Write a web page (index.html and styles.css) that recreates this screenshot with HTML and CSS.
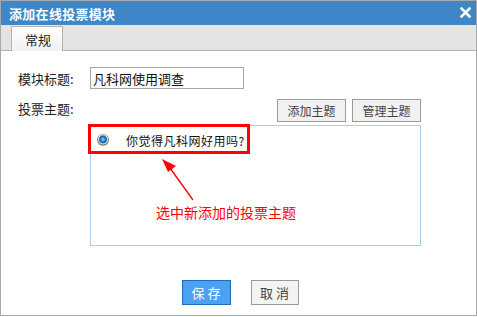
FILE: index.html
```html
<!DOCTYPE html>
<html lang="zh-CN">
<head>
<meta charset="UTF-8" />
<title>添加在线投票模块</title>
<link rel="stylesheet" href="styles.css">
</head>
<body>

  <div class="dialog">
    <div class="titlebar">
      <span class="title">添加在线投票模块</span>
      <svg class="close" width="11" height="11" viewBox="0 0 11 11">
        <path d="M1.5 1.5 L9.5 9.5 M9.5 1.5 L1.5 9.5" stroke="#fff" stroke-width="2.6" stroke-linecap="square" />
      </svg>
    </div>

    <div class="tabs">
      <div class="tab">常规</div>
    </div>

    <div class="form">
      <div class="label">模块标题:</div>
      <input class="text-input" type="text" value="凡科网使用调查">

      <div class="label label-top">投票主题:</div>
      <div class="topics">
        <div class="toolbar">
          <button class="btn">添加主题</button>
          <button class="btn">管理主题</button>
        </div>
        <div class="topic-box">
          <div class="topic">
            <span class="radio"></span>
            <span>你觉得凡科网好用吗?</span>
          </div>

          <!-- annotation -->
          <div class="mark"></div>
          <svg class="arrow" width="40" height="46" viewBox="0 0 40 46">
            <path d="M33 43 L10 11" stroke="#f00" stroke-width="1.3" />
            <path d="M2 2 L16 9 L8 15 Z" fill="#f00" />
          </svg>
          <div class="note">选中新添加的投票主题</div>
        </div>
      </div>
    </div>

    <div class="footer">
      <button class="btn-save">保存</button>
      <button class="btn-cancel">取消</button>
    </div>
  </div>

</body>
</html>
```

FILE: styles.css
```css
body {
  margin: 0;
  font-family: "Noto Sans CJK SC", sans-serif;
  font-size: 12px;
  color: #222;
}

.dialog {
  width: 475px;
  height: 314px;
  border: 1px solid #a9a9a9;
  background: #fff;
  display: flex;
  flex-direction: column;
}

.titlebar {
  height: 24px;
  background-color: #3f87c6;
  color: #fff;
  display: flex;
  align-items: center;
  justify-content: space-between;
  padding: 0 5px 0 8px;
}

.title {
  font-size: 13px;
  font-weight: bold;
  letter-spacing: 0.3px;
}

.close {
  margin-top: -1px;
}

.tabs {
  height: 25px;
  background-color: #e4e4e4;
  border-bottom: 1px solid #b4b4b4;
  display: flex;
  align-items: flex-end;
  padding-left: 10px;
}

.tab {
  width: 52px;
  height: 25px;
  margin-bottom: -1px;
  border: 1px solid #b4b4b4;
  border-bottom: none;
  background: linear-gradient(#ffffff, #f1f1f1);
  font-size: 13px;
  display: flex;
  align-items: center;
  justify-content: center;
  box-sizing: border-box;
  padding-left: 2px;
}

.form {
  display: grid;
  grid-template-columns: 72px 331px;
  row-gap: 10px;
  padding: 16px 0 0 17px;
}

.label {
  display: flex;
  align-items: center;
  font-size: 13px;
}

.label-top {
  align-items: flex-start;
}

.text-input {
  width: 154px;
  height: 22px;
  box-sizing: border-box;
  border: 1px solid #a6a6a6;
  padding: 0 2px;
  font-family: "Noto Sans CJK SC", sans-serif;
  font-size: 13px;
  color: #111;
  outline: none;
}

.toolbar {
  display: flex;
  justify-content: flex-end;
  gap: 6px;
  margin-bottom: 3px;
}

.btn {
  width: 69px;
  height: 23px;
  border: 1px solid #9a9a9a;
  background: #f1f1f1;
  font-family: "Noto Sans CJK SC", sans-serif;
  font-size: 12px;
  color: #444;
  padding: 0;
}

.topic-box {
  position: relative;
  height: 121px;
  border: 1px solid #adcbee;
  box-sizing: border-box;
}

.topic {
  display: flex;
  align-items: center;
  height: 26px;
  padding: 1px 0 0 6px;
  font-size: 12px;
  letter-spacing: 0.5px;
  color: #111;
}

.radio {
  width: 12px;
  height: 12px;
  border-radius: 50%;
  background: radial-gradient(circle at 50% 45%, #8fd8ff 0, #1a78c8 2.5px, #1d5f9c 3.5px, #e8e8e8 4.5px, #6f6f6f 5.5px, #9a9a9a 6px);
  margin-right: 17px;
}

.mark {
  position: absolute;
  left: -3px;
  top: -2px;
  width: 162px;
  height: 30px;
  border: 3px solid #f00;
  box-sizing: border-box;
}

.arrow {
  position: absolute;
  left: 69px;
  top: 31px;
}

.note {
  position: absolute;
  left: 65px;
  top: 76px;
  color: #f00;
  font-size: 14px;
}

.footer {
  display: flex;
  justify-content: center;
  gap: 20px;
  margin-top: 34px;
  padding-left: 3px;
}

.btn-save, .btn-cancel {
  width: 49px;
  height: 25px;
  font-family: "Noto Sans CJK SC", sans-serif;
  font-size: 13px;
  letter-spacing: 3px;
  padding: 0 0 0 3px;
}

.btn-save {
  background-color: #4ba2f4;
  border: 1px solid #1f6bbd;
  color: #fff;
}

.btn-cancel {
  width: 48px;
  background-color: #f3f3f3;
  border: 1px solid #9a9a9a;
  color: #444;
}
```
